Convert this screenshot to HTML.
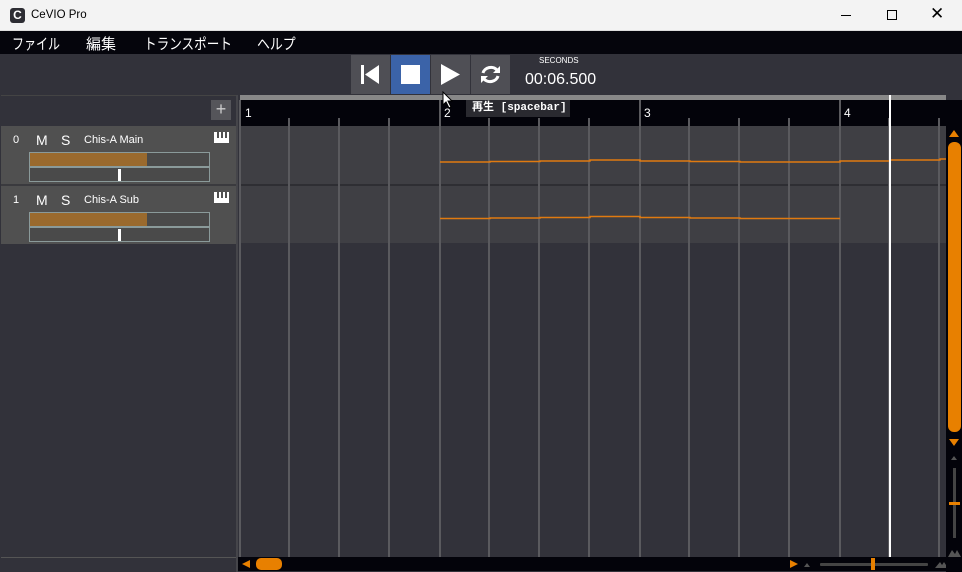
<!DOCTYPE html>
<html><head><meta charset="utf-8"><style>
*{margin:0;padding:0;box-sizing:border-box}
body{width:962px;height:572px;overflow:hidden;background:#32323a;font-family:"Liberation Sans","Noto Sans CJK JP",sans-serif;position:relative}
.a{position:absolute}
.vl{position:absolute;width:2px;background:#5a5a5e}
.btn{position:absolute;top:55px;width:39px;height:39px;background:#4f4f55}
.tr{position:absolute;left:1px;width:235px;height:58px;background:#505050;color:#fff}
.tr .n{position:absolute;left:12px;top:8px;font-size:11px}
.tr .m{position:absolute;left:35px;top:6px;font-size:14px}
.tr .s{position:absolute;left:60px;top:6px;font-size:14px}
.tr .t{position:absolute;left:83px;top:8px;font-size:11px}
.bar{position:absolute;left:28px;width:181px;height:15px;border:1px solid #8a9a9a;background:#4a4a4a}
.mn{position:absolute;top:2px;transform-origin:0 0;white-space:nowrap}
</style></head><body>
<div class="a" style="left:0;top:0;width:962px;height:31px;background:#f3f3f3;border-bottom:1px solid #ddd"></div>
<div class="a" style="left:10px;top:8px;width:15px;height:15px;border-radius:3px;background:#2d2d33;color:#fff;font-size:12px;font-weight:bold;text-align:center;line-height:15px">C</div>
<div class="a" style="left:31px;top:9px;font-size:11.5px;color:#000">CeVIO Pro</div>
<div class="a" style="left:841px;top:15px;width:10px;height:1px;background:#000"></div>
<div class="a" style="left:887px;top:10px;width:10px;height:10px;border:1px solid #000"></div>
<div class="a" style="left:930px;top:4px;font-size:17px;color:#000">✕</div>
<div class="a" style="left:0;top:31px;width:962px;height:23px;background:#05050c;color:#fff;font-size:15px">
<span class="mn" style="left:12px;transform:scaleX(0.80)">ファイル</span><span class="mn" style="left:86px;transform:scaleX(1)">編集</span><span class="mn" style="left:144px;transform:scaleX(0.84)">トランスポート</span><span class="mn" style="left:257px;transform:scaleX(0.86)">ヘルプ</span></div>
<div class="btn" style="left:351px"><svg width="39" height="39"><rect x="10" y="10" width="3" height="19" fill="#fff"/><path d="M14 19.5L28 10V29Z" fill="#fff"/></svg></div>
<div class="btn" style="left:391px;background:#3b63a8"><div class="a" style="left:10px;top:10px;width:19px;height:19px;background:#fff"></div></div>
<div class="btn" style="left:431px"><svg width="39" height="39"><path d="M10 9L29 19.5L10 30Z" fill="#fff"/></svg></div>
<div class="btn" style="left:471px"><svg width="39" height="39"><path d="M12 18a8 7 0 0 1 14-3" stroke="#fff" stroke-width="3" fill="none"/><path d="M29 11v7h-7z" fill="#fff"/><path d="M27 21a8 7 0 0 1-14 3" stroke="#fff" stroke-width="3" fill="none"/><path d="M10 28v-7h7z" fill="#fff"/></svg></div>
<div class="a" style="left:539px;top:56px;font-size:8px;color:#fff">SECONDS</div>
<div class="a" style="left:525px;top:71px;font-size:16px;color:#fff">00:06.500</div>
<div class="a" style="left:1px;top:95px;width:235px;height:30px;background:#32323a;border-top:1px solid #444"></div>
<div class="a" style="left:211px;top:100px;width:20px;height:20px;background:#55555a;color:#ccc;font-size:18px;text-align:center;line-height:19px">+</div>
<div class="tr" style="top:126px"><span class="n">0</span><span class="m">M</span><span class="s">S</span><span class="t">Chis-A Main</span>
<svg class="a" style="left:213px;top:6px" width="15" height="11"><rect width="15" height="11" fill="#fff"/><rect x="3" y="0" width="2" height="6" fill="#505050"/><rect x="7" y="0" width="2" height="6" fill="#505050"/><rect x="11" y="0" width="2" height="6" fill="#505050"/></svg>
<div class="bar" style="top:26px"><div style="width:117px;height:13px;background:#9a6a2e"></div></div>
<div class="bar" style="top:41px"><div class="a" style="left:88px;top:1px;width:3px;height:12px;background:#fff"></div></div></div>
<div class="a" style="left:1px;top:184px;width:235px;height:2px;background:#3a3a3e"></div>
<div class="tr" style="top:186px"><span class="n">1</span><span class="m">M</span><span class="s">S</span><span class="t">Chis-A Sub</span>
<svg class="a" style="left:213px;top:6px" width="15" height="11"><rect width="15" height="11" fill="#fff"/><rect x="3" y="0" width="2" height="6" fill="#505050"/><rect x="7" y="0" width="2" height="6" fill="#505050"/><rect x="11" y="0" width="2" height="6" fill="#505050"/></svg>
<div class="bar" style="top:26px"><div style="width:117px;height:13px;background:#9a6a2e"></div></div>
<div class="bar" style="top:41px"><div class="a" style="left:88px;top:1px;width:3px;height:12px;background:#fff"></div></div></div>
<div class="a" style="left:1px;top:557px;width:235px;height:1px;background:#555"></div>
<div class="a" style="left:236px;top:95px;width:2px;height:477px;background:#45454a"></div>
<div class="a" style="left:240px;top:95px;width:706px;height:5px;background:#888"></div>
<div class="a" style="left:240px;top:100px;width:706px;height:26px;background:#03030a"></div>
<div class="a" style="left:240px;top:126px;width:706px;height:58px;background:#3f3f44"></div>
<div class="a" style="left:240px;top:184px;width:706px;height:2px;background:#2e2e33"></div>
<div class="a" style="left:240px;top:186px;width:706px;height:57px;background:#3f3f44"></div>
<div class="vl" style="left:239px;top:100px;height:457px"></div>
<div class="vl" style="left:439px;top:100px;height:457px"></div>
<div class="vl" style="left:639px;top:100px;height:457px"></div>
<div class="vl" style="left:839px;top:100px;height:457px"></div>
<div class="vl" style="left:288px;top:118px;height:439px"></div><div class="vl" style="left:338px;top:118px;height:439px"></div><div class="vl" style="left:388px;top:118px;height:439px"></div>
<div class="vl" style="left:488px;top:118px;height:439px"></div><div class="vl" style="left:538px;top:118px;height:439px"></div><div class="vl" style="left:588px;top:118px;height:439px"></div>
<div class="vl" style="left:688px;top:118px;height:439px"></div><div class="vl" style="left:738px;top:118px;height:439px"></div><div class="vl" style="left:788px;top:118px;height:439px"></div>
<div class="vl" style="left:888px;top:118px;height:439px"></div><div class="vl" style="left:938px;top:118px;height:439px"></div>
<div class="a" style="left:245px;top:106px;color:#fff;font-size:12px">1</div>
<div class="a" style="left:444px;top:106px;color:#fff;font-size:12px">2</div>
<div class="a" style="left:644px;top:106px;color:#fff;font-size:12px">3</div>
<div class="a" style="left:844px;top:106px;color:#fff;font-size:12px">4</div>
<svg class="a" style="left:0;top:0" width="962" height="572"><g stroke="#e07a10" stroke-width="1.5" fill="none">
<path d="M440 162H490V161.5H540V161H590V160H640V161H690V161.5H740V162H840V161H890V160H940V159H946"/>
<path d="M440 218.5H490V218H540V217.5H590V216.5H640V217.5H690V218H740V218.5H840"/></g></svg>
<div class="a" style="left:889px;top:95px;width:2px;height:462px;background:#fff"></div>
<div class="a" style="left:466px;top:100px;width:104px;height:17px;background:#2a2a30;color:#fff;font-size:11px;font-family:'Liberation Mono','Noto Sans CJK JP',monospace;font-weight:bold;line-height:17px;padding-left:6px">再生 [spacebar]</div>
<svg class="a" style="left:442px;top:91px" width="12" height="18"><path d="M1 1V14L4 11L7 17L9 16L6 10H10Z" fill="#fff" stroke="#000" stroke-width="1"/></svg>
<div class="a" style="left:946px;top:100px;width:16px;height:472px;background:#03030a"></div>
<svg class="a" style="left:946px;top:100px" width="16" height="472"><path d="M3 37L8 30L13 37Z" fill="#e88000"/><rect x="2" y="42" width="13" height="290" rx="6" fill="#e88000"/><path d="M3 339L8 346L13 339Z" fill="#e88000"/><path d="M5 360L8 356L11 360Z" fill="#555"/><rect x="7" y="368" width="3" height="70" fill="#444"/><rect x="3" y="402" width="11" height="3" fill="#e88000"/><path d="M2 457L6 450L9 454L11 450L15 457Z" fill="#555"/></svg>
<div class="a" style="left:238px;top:557px;width:708px;height:14px;background:#03030a"></div>
<svg class="a" style="left:238px;top:557px" width="708" height="14"><path d="M12 3L4 7L12 11Z" fill="#e88000"/><rect x="18" y="1" width="26" height="12" rx="5" fill="#e88000"/><path d="M552 3L560 7L552 11Z" fill="#e88000"/><path d="M566 10L569 6L572 10Z" fill="#555"/><rect x="582" y="6" width="108" height="3" rx="1" fill="#444"/><rect x="633" y="1" width="4" height="12" fill="#e88000"/><path d="M697 11L702 5L704 8L706 5L710 11Z" fill="#555"/></svg>
</body></html>
